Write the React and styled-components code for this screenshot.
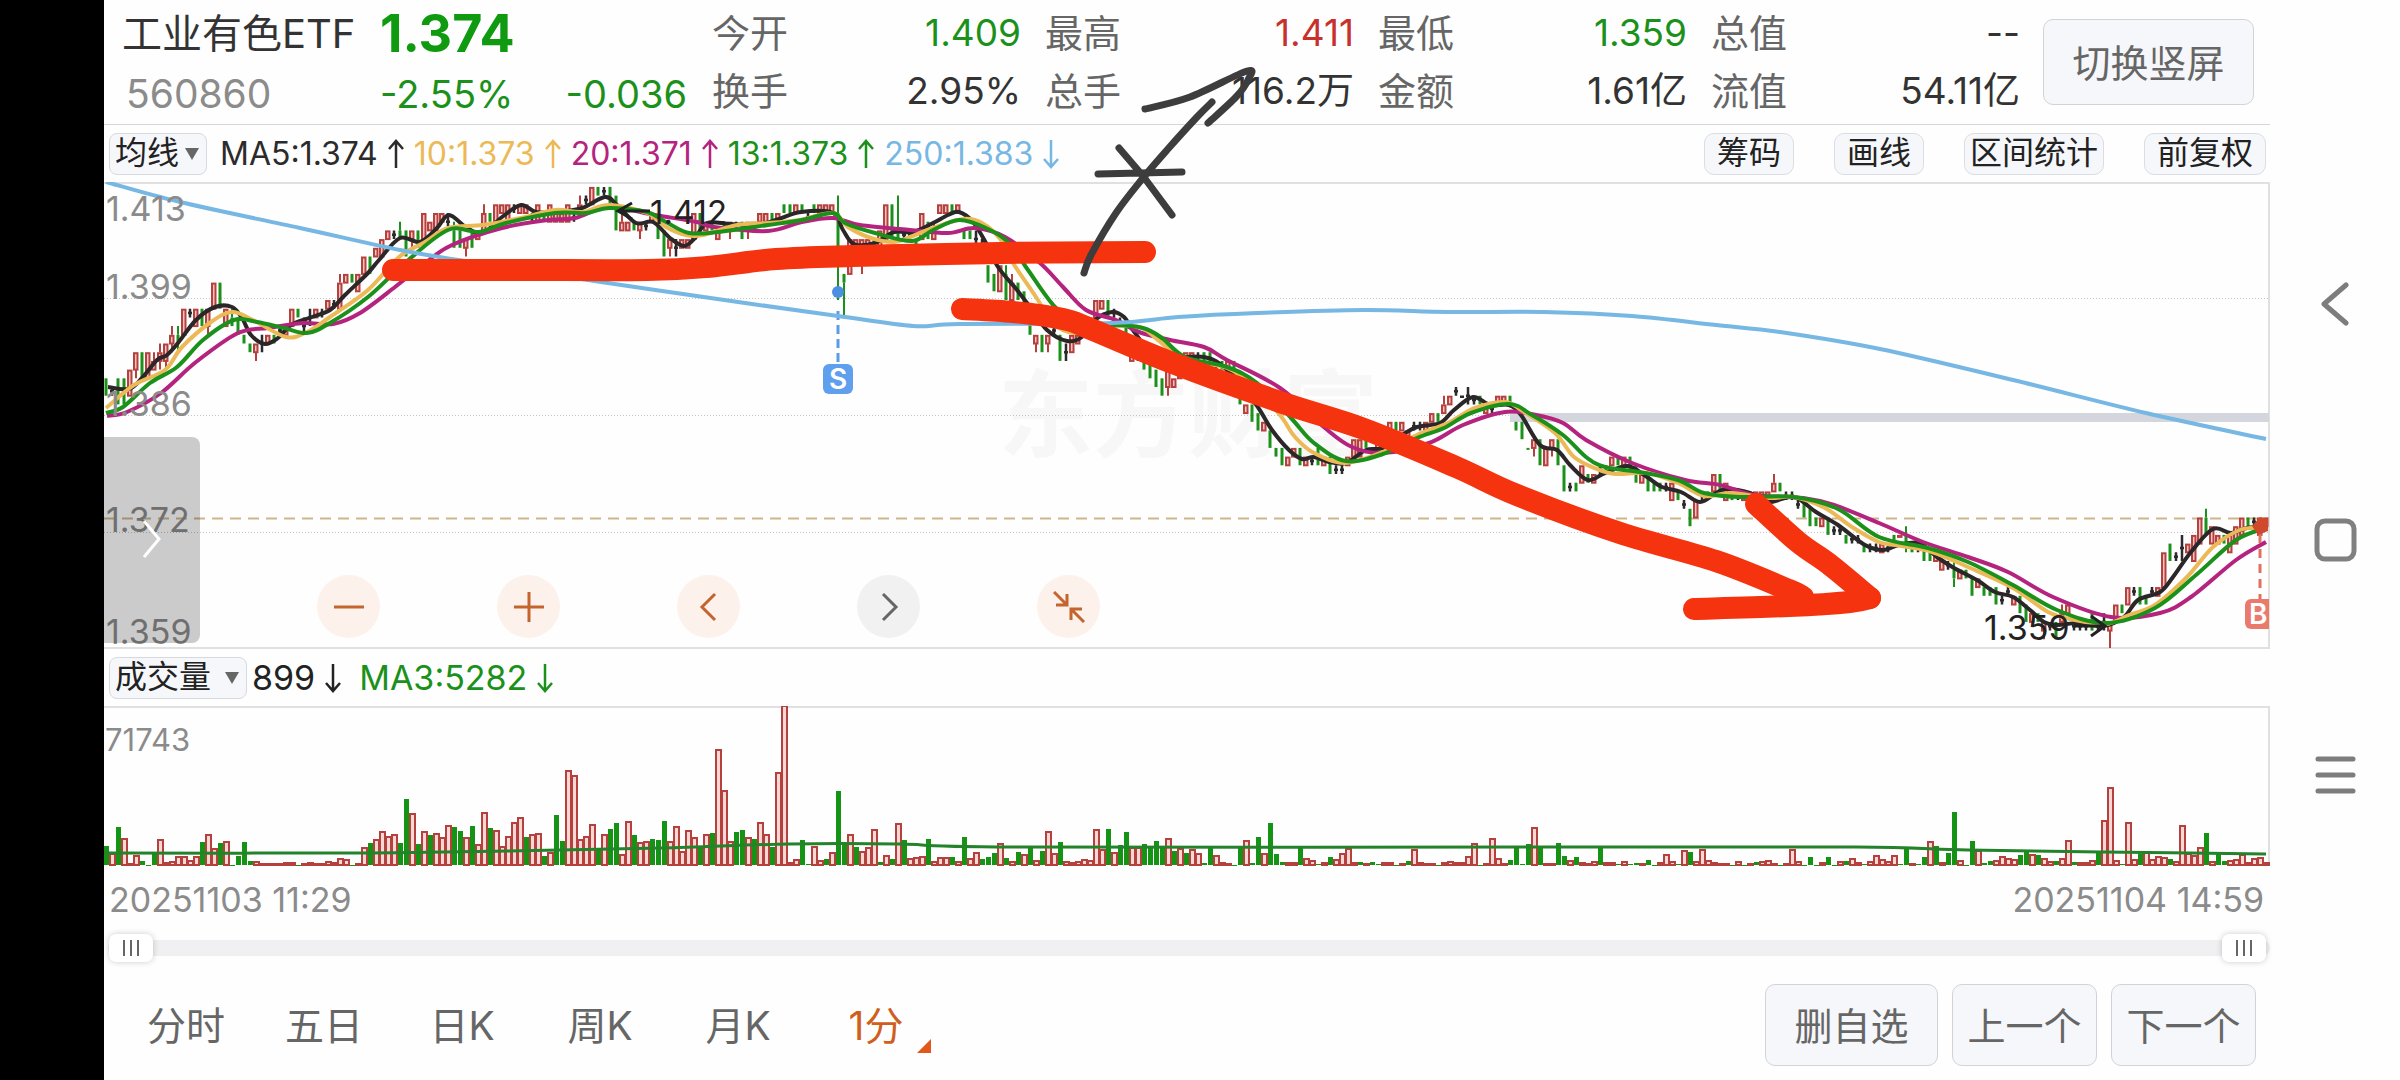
import React, { useState } from 'react'
import styled, { createGlobalStyle } from 'styled-components'

const GlobalStyle = createGlobalStyle`
  * {
    box-sizing: border-box;
  }
  body {
    margin: 0;
    background: #fefefe;
    font-family: Inter, "Noto Sans CJK SC", sans-serif;
    color: #333;
  }
  button, select {
    font-family: inherit;
  }
`

const UP = '#b5413e'
const DOWN = '#1b911b'
const FLAT = '#2b2b2b'

const Screen = styled.div`
  position: relative;
  display: flex;
  min-height: 100vh;
`

const Rail = styled.div`
  width: 104px;
  background: #000;
`

const Panel = styled.main`
  flex: 1;
  min-width: 0;
  display: flex;
  flex-direction: column;
`

const Header = styled.header`
  display: flex;
  padding: 4px 16px 0 18px;
  border-bottom: 1px solid #d6d6d6;
`

const NameBlock = styled.div`
  width: 258px;
`

const PriceBlock = styled.div`
  width: 307px;
`

const Name = styled.h1`
  margin: 0;
  font-size: 40px;
  font-weight: 400;
  line-height: 60px;
  white-space: nowrap;
`

const Code = styled.div`
  padding-left: 4px;
  font-size: 39px;
  line-height: 60px;
  color: #8b8b8b;
`

const Price = styled.div`
  font-size: 52px;
  font-weight: 700;
  line-height: 60px;
  color: #0f9a0f;
`

const Change = styled.div`
  display: flex;
  justify-content: space-between;
  font-size: 38px;
  line-height: 60px;
  color: ${DOWN};
`

const Stats = styled.dl`
  flex: 1;
  display: grid;
  grid-template-columns: repeat(4, 1fr);
  align-content: start;
  column-gap: 24px;
  margin: 0 23px 0 25px;
`

const Stat = styled.div`
  display: flex;
  justify-content: space-between;
  font-size: 38px;
  line-height: 58px;
  white-space: nowrap;

  dt {
    color: #666;
  }
  dd {
    margin: 0;
    color: ${(props) => props.$color || '#333'};
    font-size: 37px;
  }
`

const Button = styled.button`
  padding: 0 0 4px;
  border: 1px solid #d0d4d8;
  border-radius: 10px;
  background: #f6f7fa;
  color: #666;
  font-size: 38px;
  white-space: nowrap;
`

const SwitchButton = styled(Button)`
  width: 211px;
  height: 86px;
  margin-top: 15px;
`

const Bar = styled.div`
  display: flex;
  align-items: center;
  height: 57px;
  padding: 0 4px 0 5px;
`

const Picker = styled.label`
  position: relative;
  display: flex;
  width: ${(props) => props.$width};

  select {
    appearance: none;
    width: 100%;
    height: 42px;
    padding: 0 0 2px 5px;
    border: 1px solid #d6dadf;
    border-radius: 8px;
    background: #f6f7fa;
    color: #222;
    font-size: 32px;
    line-height: 38px;
  }
  svg {
    position: absolute;
    right: 8px;
    top: 15px;
    pointer-events: none;
  }
`

const Legend = styled.div`
  display: flex;
  flex: 1;
  gap: ${(props) => props.$gap};
  padding-left: ${(props) => props.$left};
`

const LegendItem = styled.span`
  display: flex;
  align-items: center;
  gap: 10px;
  color: ${(props) => props.$color};
  font-size: ${(props) => props.$size};
  line-height: 40px;
  white-space: nowrap;
`

const Tools = styled.div`
  display: flex;
  gap: 40px;
`

const ToolButton = styled(Button)`
  height: 42px;
  padding: 0 ${(props) => (props.$tight ? '5px' : '12px')} 2px;
  border-color: #dadee2;
  color: #222;
  font-size: 32px;
  line-height: 38px;
`

const ChartWrap = styled.section`
  position: relative;
`

const Chart = styled.svg`
  display: block;
  width: 100%;
  height: auto;
`

const Drawer = styled.button`
  position: absolute;
  left: 0;
  bottom: 6px;
  width: 96px;
  height: 206px;
  padding: 0;
  border: none;
  border-radius: 0 8px 8px 0;
  background: rgba(0, 0, 0, 0.2);
`

const Controls = styled.div`
  position: absolute;
  left: 213px;
  bottom: 11px;
  display: flex;
  gap: 117px;
`

const RoundButton = styled.button`
  display: flex;
  align-items: center;
  justify-content: center;
  width: 63px;
  height: 63px;
  padding: 0;
  border: none;
  border-radius: 50%;
  background: ${(props) => (props.$gray ? '#f1f1f2' : '#fdf1eb')};
  color: ${(props) => (props.$gray ? '#666' : '#c4652f')};
`

const Dates = styled.div`
  display: flex;
  justify-content: space-between;
  padding: 0 6px 0 5px;
  color: #8b8b8b;
  font-size: 34px;
  line-height: 65px;
`

const Range = styled.div`
  position: relative;
  display: flex;
  align-items: center;
  height: 32px;
  padding-left: 4px;

  &::before {
    content: '';
    flex: 1;
    height: 16px;
    border-radius: 8px;
    background: #f0f0f3;
  }
  input {
    position: absolute;
    left: 5px;
    right: 4px;
    width: calc(100% - 9px);
    height: 28px;
    margin: 0;
    appearance: none;
    background: none;
    pointer-events: none;
  }
  input::-webkit-slider-thumb {
    appearance: none;
    width: 44px;
    height: 28px;
    border: none;
    border-radius: 7px;
    background:
      linear-gradient(#666, #666) 14px 6px / 2px 16px no-repeat,
      linear-gradient(#666, #666) 21px 6px / 2px 16px no-repeat,
      linear-gradient(#666, #666) 28px 6px / 2px 16px no-repeat,
      #fff;
    box-shadow: 0 0 6px rgba(0, 0, 0, 0.2);
    pointer-events: auto;
  }
`

const Footer = styled.footer`
  display: flex;
  align-items: center;
  padding: 20px 14px 14px 13px;
`

const Tabs = styled.nav`
  flex: 1;
  display: flex;
`

const Tab = styled.button`
  position: relative;
  width: 138px;
  height: 60px;
  padding: 0 0 6px;
  border: none;
  background: none;
  color: ${(props) => (props.$active ? '#cf5f1d' : '#666')};
  font-size: 39px;

  svg {
    position: absolute;
    right: 14px;
    bottom: 2px;
  }
`

const Actions = styled.div`
  display: flex;
  gap: 14px;
`

const ActionButton = styled(Button)`
  width: ${(props) => props.$width};
  height: 82px;
`

const SystemNav = styled.nav`
  display: flex;
  flex-direction: column;
  align-items: center;
  justify-content: center;
  gap: 192px;
  width: 130px;

  button {
    display: flex;
    padding: 0;
    border: none;
    background: none;
  }
`

const Ink = styled.svg`
  position: absolute;
  left: 0;
  top: 0;
  width: 100%;
  height: auto;
  pointer-events: none;
`

const stats = [
  ['今开', '1.409', DOWN],
  ['最高', '1.411', '#c8302d'],
  ['最低', '1.359', DOWN],
  ['总值', '--'],
  ['换手', '2.95%'],
  ['总手', '116.2万'],
  ['金额', '1.61亿'],
  ['流值', '54.11亿'],
]

const averages = [
  ['MA5:1.374', '#2b2b2b', true],
  ['10:1.373', '#ecb957', true],
  ['20:1.371', '#b4237d', true],
  ['13:1.373', DOWN, true],
  ['250:1.383', '#76b7e3', false],
]

// one token per minute: colour, body high - body low, optional :wick high-wick low, in ticks above 1.359
const candles = `
g31-29 k30-29 g31-28 g31-28 r32-29 r34-32:34-31 g34-31 r34-31 r33-32:34-32 r34-33:35-32
r35-33:35-32 r36-35:37-34 g36-35:37-34 r39-36 k39-38 r39-37 g39-37 r39-37:39-36 r42-39 g42-39
r39-37 g38-37:39-37 g38-36 g36-35 g35-34 r35-34:35-33 k36-34 r36-35 g36-35 k37-36
r37-36 r39-37 g39-38 k38-36 k39-37 r39-38 k39-38 r40-39 k40-39 r42-39:43-39
r43-42 g43-42 r43-41 r45-43 g45-43 r46-45 r47-45 r48-47 k48-47 g48-47:49-47
g48-45 r48-47:48-46 g48-46 r50-47 r49-48 r50-48 r50-49 k50-48 g48-46:49-46 g48-46
r47-46:47-45 g48-46 r48-47 r50-48:51-48 g50-49 r51-49 r51-50 r51-49 k51-50 r51-50
r51-50 k50-49 r51-49 g50-49 r51-49 r50-49 r50-49 r51-49 k50-49 r51-50:52-50
k52-51 r53-51 g53-52 k53-52 g53-51 g52-48 r49-48:50-48 r49-48 g49-48 r49-48:49-47
k49-48 r50-49 g49-47 g48-45 r47-46:47-45 k47-45 r47-46 r47-46 r50-47 g50-48
r49-48 g49-48 r48-47 g49-48 r49-48:49-47 k49-48 g49-47 r49-48:49-47 r49-48 r50-49
r50-49 g50-49 r50-49 g51-50 g51-50 r51-50 g51-50 k50-49 g51-50 r51-50
r51-50 r51-50 g50-44:52-40 g43-42:43-38 r47-43 r47-45 r47-46:47-43 r47-46 g47-46 r48-46
r51-47 g51-47 g48-47:52-47 k48-47 k48-47 g47-46 r50-47 g49-47 r48-47:49-47 r51-50
r51-50 g51-50 r51-50 g48-47 g48-47 k48-46 k47-45 g44-42 g43-41 r44-41
g43-40:44-40 r42-40:43-40 g42-40 g41-39 g38-36 r36-35:36-34 g36-34 r36-35:36-34 k37-36 g36-33
k35-33 r36-34 r36-35 k37-36 r38-37 r40-38 r40-39 g40-38 k39-38 k38-37
g37-36 r34-33 k34-33 g33-32 g33-31 g32-30 g31-29 r32-30:32-29 r31-30 r32-31
r34-33 r34-33 k34-33 g34-33 g34-33 k33-32 g33-32 r33-32 g33-31 g29-28
r28-27 g28-26 g27-25 r26-25 g25-23 g23-22 g23-21 r22-21 r23-22 g23-21
r22-21 k22-21 g23-21 r22-21 g22-20 k21-20 k21-20 r22-21 r24-22 r24-22
g24-23 k23-22 r24-23 r25-24 r26-24 g26-25 r26-25 r25-24 k26-25 k26-25
r26-25 r27-26 g27-26 r28-27:29-27 r29-28 k30-29 k29-29 k30-28 k29-28 g29-28
r28-27 k28-27 r29-28 r29-28 g29-28 g26-25 g26-24 g23-23 r24-23:24-22 g24-21
r23-21 r24-23:24-22 g24-21 g21-18 k19-18 g19-18 r21-19 g20-19 r20-19 k21-20
g21-20 r22-21 g22-21 r22-21 g22-20 g21-19 r20-19 g20-18 g19-18 g19-18
k19-18 r19-17 g18-17 k17-16 g16-14 r17-15 k18-17 g18-17 r20-18 g20-18
r19-17 g18-17 k18-17 r18-17 g18-17 r18-17 r18-17 r18-17 r19-18:20-18 g19-18
k18-17 k18-17 k17-16 g17-15 g16-14 g15-14 r15-14 g15-13 k14-13 k14-13
g13-12 k13-12 k13-12 g12-11 k12-11 k12-11 r12-11 k12-11 g13-12 r13-13
g13-12:14-11 g12-11 k12-11 g12-10 g11-10 r11-10 r10-9 k10-9 g9-8:10-7 r9-8
g9-8 g8-6 r8-7 g7-6 g7-6 g7-5 k6-5 k7-6 r6-5 g6-4
g5-3 r4-3 g4-3 r3-2:3-1 k3-2 g3-1 r4-3:5-3 r5-4 k3-2 k3-2
k3-2 g4-2 k3-2 k4-2 r3-2:3-0 r5-3 g5-4 r7-5 k7-6 g7-5
g6-5 k7-6 r7-6 r11-7 g12-10 k11-10 k13-10 r12-11 r13-10 r15-12
g15-13:16-13 r14-12 r13-12 g13-12 r13-11 r14-12 r15-13 g15-14 k15-14 r15-13
r15-14
`.trim().split(/\s+/)

const volumes = `
g19 r11 g38 r26 r1 r9 g4 g0 g12 r25 r2 r3 r8 r8 r4 r8 g23 r30 r16 g22 r23 g0 g9 g23 g4 r3 r1 r1 r1 r1
r2 r2 g0 r1 r2 r1 r1 r3 r2 r6 r5 g0 r1 r17 g22 r25 r33 r28 r30 g22 g66 r51 g21 r33 g30 r31 r27 r39 g38 g34
r27 g39 r20 r52 g37 r34 r18 r28 r42 r47 g28 r30 r31 g9 r12 g50 g24 r94 r89 r25 r28 r40 g15 r30 g36 g42 r10 r43 g30 r22
r23 g26 g25 g44 r23 r38 r13 r34 r27 g17 r30 g32 r115 r74 r23 g33 g35 r27 g26 r42 r30 g18 r92 r159 r2 r5 g25 g1 r18 r4
g6 r12 g74 g21 r30 g18 r13 r17 r35 g3 r9 g6 r41 g25 r6 r7 r8 g26 r3 r7 r7 g8 r3 g28 r6 r12 g6 g8 g12 r21
g7 r3 g13 r10 g19 r4 g14 r33 r11 g23 r3 r2 r3 r5 r4 r35 r15 g36 r12 g20 g33 r17 r17 g21 g17 g24 g19 r26 g14 r16
g12 r15 r11 g2 g19 r9 r2 r1 g0 g19 r24 g2 g28 r11 g42 g11 g3 r2 r2 g17 r6 r4 g1 r2 g8 r5 r11 r16 r2 g3
r1 g3 g1 r2 r2 g0 r1 g4 r15 r2 r1 r1 g0 r2 r3 r2 r2 r8 r21 g0 r1 r26 r6 r1 g5 g18 g1 g21 r37 g17
r1 r1 g22 g9 r4 g8 r2 r1 r3 g19 r2 r2 g1 r3 g1 g2 r1 g5 g0 r2 r10 r3 g1 r14 g13 r3 r15 r4 r2 r1
r1 g0 r3 g0 r1 g3 r3 r4 r1 g0 r1 r15 r3 g0 g8 g0 r2 g8 g0 r3 g4 r6 r2 g1 r3 r9 r5 r3 r9 g1
g18 r1 g1 g8 r23 g19 r2 g12 g53 r4 g0 g24 r14 g2 g4 r4 r8 r6 r5 g10 g14 r10 g10 r6 r3 g4 r6 r24 g3 r2
r2 r4 g13 r44 r77 r4 g1 r42 r5 g11 r13 r5 r8 r7 g6 r3 r39 r11 r9 r17 g32 r3 g11 g4 r4 r5 r10 r2 r6 r7
r2
`.trim().split(/\s+/)

const ma5 = '108,387 129,389 142,378 157,360 167,355 178,343 196,320 215,307 232,307 242,318 251,335 265,344 278,338 291,325 312,317 330,310 345,295 368,273 379,260 400,238 420,242 437,228 449,215 467,228 483,233 502,217 521,205 536,212 559,212 582,208 605,197 617,205 636,223 653,222 670,238 684,246 695,238 707,223 730,224 757,225 776,220 801,212 833,213 843,230 854,244 875,243 894,232 913,232 933,223 948,215 959,212 973,222 986,243 998,267 1017,290 1030,307 1047,330 1067,341 1082,337 1095,320 1112,312 1124,317 1135,333 1158,357 1204,357 1227,370 1255,403 1272,430 1289,450 1302,459 1314,457 1329,462 1346,463 1366,450 1383,448 1402,435 1417,427 1440,423 1454,410 1473,397 1490,405 1509,405 1521,415 1540,445 1557,450 1570,465 1588,480 1605,473 1628,466 1647,477 1662,487 1681,492 1700,502 1716,493 1727,489 1750,493 1769,502 1794,497 1816,512 1838,525 1865,545 1883,550 1899,545 1919,543 1937,557 1954,568 1977,580 1995,592 2013,597 2030,610 2044,622 2057,625 2079,623 2104,626 2124,617 2138,600 2160,592 2173,577 2191,552 2213,529 2231,533 2247,528 2266,527'
const ma10 = '106,408 134,385 165,370 182,347 211,322 232,312 253,320 286,337 307,332 330,317 368,290 399,257 425,242 448,228 483,225 521,218 555,210 582,212 609,205 647,213 666,227 686,235 703,235 737,225 768,223 799,220 833,213 848,227 871,238 894,242 910,237 933,228 963,219 982,223 1001,240 1013,263 1036,297 1053,323 1074,333 1101,327 1139,327 1158,340 1185,360 1227,368 1254,387 1280,415 1295,437 1314,453 1345,463 1383,452 1417,435 1448,423 1475,408 1505,402 1524,412 1555,433 1574,457 1597,469 1616,474 1647,473 1678,483 1704,496 1731,493 1769,498 1794,497 1825,508 1852,527 1879,542 1901,546 1932,552 1968,567 2013,588 2048,612 2075,620 2106,624 2129,615 2155,605 2187,577 2213,547 2240,530 2266,527'
const ma13 = '106,413 123,407 150,383 177,367 203,340 234,320 257,322 284,328 307,333 330,323 368,297 406,262 448,230 479,232 506,223 555,213 586,213 609,208 647,212 666,222 689,233 718,232 768,225 802,220 833,213 845,223 875,233 912,241 933,230 959,220 986,228 1009,243 1028,270 1055,307 1082,327 1112,325 1143,328 1162,338 1185,357 1227,367 1257,383 1291,418 1314,443 1346,461 1383,454 1417,438 1444,428 1471,413 1509,404 1532,415 1563,435 1586,457 1605,467 1639,472 1678,480 1704,493 1739,497 1794,497 1838,509 1879,537 1928,548 1968,562 2013,585 2057,610 2106,623 2155,608 2196,575 2236,540 2266,528'
const ma20 = '107,416 127,412 161,393 196,362 238,333 268,328 303,323 333,324 360,313 395,287 425,263 452,245 502,228 548,220 575,218 609,207 655,215 697,222 714,227 768,231 802,222 833,218 860,225 910,230 948,233 975,228 1005,237 1040,263 1063,287 1086,310 1116,320 1139,332 1170,340 1204,347 1227,360 1280,388 1325,428 1352,447 1383,453 1429,443 1463,425 1505,412 1536,415 1563,423 1586,440 1632,463 1685,480 1720,485 1754,495 1803,498 1834,505 1879,523 1923,542 1968,557 2008,572 2053,597 2111,617 2160,613 2191,597 2236,560 2266,542'
const ma250 = '106,182 180,202 300,228 400,250 465,261 601,282 745,303 838,316 913,326 959,324 1112,323 1178,317 1257,313 1364,310 1448,312 1544,312 1632,316 1716,325 1780,332 1880,349 2013,380 2146,413 2266,439'
const volumeMa = '104,853 355,853 508,851 661,848 789,844 900,844 1015,847 1589,847 1856,847 1968,850 2102,852 2266,854'

const axis = [
  ['1.413', 221],
  ['1.399', 299],
  ['1.386', 416],
  ['1.372', 532],
  ['1.359', 644],
]

// Catmull-Rom through the points, as cubic beziers
const smooth = (points) => {
  const p = points.split(' ').map((s) => s.split(',').map(Number))
  let d = `M${p[0]}`
  for (let i = 0; i < p.length - 1; i++) {
    const a = p[i - 1] || p[i]
    const b = p[i]
    const c = p[i + 1]
    const e = p[i + 2] || c
    d += `C${b[0] + (c[0] - a[0]) / 6},${b[1] + (c[1] - a[1]) / 6} ${c[0] - (e[0] - b[0]) / 6},${c[1] - (e[1] - b[1]) / 6} ${c}`
  }
  return d
}

const barX = (i) => 106 + 6 * i
const tickY = (n) => 648 - 8.7 * n

const Candle = ({ token, i }) => {
  const [body, wick] = token.slice(1).split(':')
  const [hi, lo] = body.split('-').map(Number)
  const x = barX(i)
  const top = tickY(hi)
  const height = Math.max(tickY(lo) - top, 2)
  const [wHi, wLo] = wick ? wick.split('-').map(Number) : [hi, lo]
  if (token[0] === 'k') {
    return <path d={`M${x} ${top}v${height}M${x - 2} ${top + height / 2}h4`} stroke={FLAT} strokeWidth="2.5" />
  }
  const color = token[0] === 'r' ? UP : DOWN
  return (
    <g stroke={color} strokeWidth="2">
      {wHi > hi && <path d={`M${x} ${tickY(wHi)}V${top}`} />}
      {wLo < lo && <path d={`M${x} ${tickY(lo)}V${tickY(wLo)}`} />}
      {token[0] === 'r'
        ? <rect x={x - 2} y={top + 1} width="3.5" height={Math.max(height - 1, 1)} fill="#f3c4c1" strokeWidth="2" />
        : <path d={`M${x} ${top}v${height}`} strokeWidth="3" />}
    </g>
  )
}

const VolumeBar = ({ token, i }) => {
  const h = Number(token.slice(1))
  const x = barX(i)
  if (token[0] === 'g') {
    return <rect x={x - 2} y={865 - h} width="5" height={Math.max(h, 1)} fill="#149314" />
  }
  return <rect x={x - 2} y={865 - h} width="5" height={Math.max(h, 1)} fill="#f8d8d5" stroke={UP} strokeWidth="2" />
}

const Arrow = ({ up }) => (
  <svg width="16" height="30" viewBox="0 0 16 30" fill="none" stroke="currentColor" strokeWidth="2.5">
    {up ? <path d="M8 29V2M1 10L8 2l7 8" /> : <path d="M8 1v27M1 20l7 8 7-8" />}
  </svg>
)

const Caret = () => (
  <svg width="14" height="12" viewBox="0 0 14 12">
    <path d="M0 0h14L7 12z" fill="#666" />
  </svg>
)

const PriceChart = () => (
  <Chart viewBox="104 182 2166 467" fontFamily="Inter">
    <text x="998" y="450" fontFamily="Noto Sans CJK SC" fontWeight="700" fontSize="95" fill="#f7f7f7">东方财富</text>
    <path d="M104 298.500H2269M104 415.500H2269M104 532.500H2269" stroke="#c4c4c4" strokeDasharray="1 2" />
    <path d="M104 518.500H2269" stroke="#cdb58c" strokeWidth="2" strokeDasharray="11 7" />
    <path d="M104 183H2269V648H104" fill="none" stroke="#e0e0e0" strokeWidth="2" />
    <rect x="1510" y="413" width="759" height="9" fill="#d3d6dc" />
    <path d="M838 311V364" stroke="#5b9be8" strokeWidth="3" strokeDasharray="9 5" />
    {candles.map((token, i) => <Candle key={i} token={token} i={i} />)}
    <g fill="none" strokeWidth="4" strokeLinejoin="round">
      <path d={smooth(ma5)} stroke="#2b2627" />
      <path d={smooth(ma20)} stroke="#b4237d" />
      <path d={smooth(ma10)} stroke="#ecb957" />
      <path d={smooth(ma13)} stroke="#1b911b" />
      <path d={smooth(ma250)} stroke="#76b7e3" />
    </g>
    <g fontSize="34" fill="#8b8b8b">
      {axis.map(([label, y]) => <text key={label} x="106" y={y}>{label}</text>)}
    </g>
    <g fill="none" stroke="#222" strokeWidth="3">
      <path d="M650 211H618M632 203l-14 8 14 8" />
      <path d="M2074 626h30M2091 616l14 10-14 10" />
    </g>
    <text x="650" y="224" fontSize="33" fill="#222">1.412</text>
    <text x="1984" y="640" fontSize="34" fill="#222">1.359</text>
    <circle cx="838" cy="292" r="6" fill="#4a8fe0" />
    <rect x="823" y="364" width="30" height="30" rx="6" fill="#609eee" />
    <text x="838" y="389" fontSize="28" fontWeight="600" fill="#fff" textAnchor="middle">S</text>
    <path d="M2260 534V600" stroke="#e0705f" strokeWidth="3" strokeDasharray="9 6" />
    <path d="M2252 526l8-9 8 2v12l-10 4z" fill="#cf4a2c" />
    <path d="M2269 599h-18a6 6 0 0 0-6 6v18a6 6 0 0 0 6 6h18z" fill="#ea7a6b" />
    <text x="2249" y="624" fontSize="28" fontWeight="600" fill="#fff">B</text>
  </Chart>
)

const VolumeChart = () => (
  <Chart viewBox="104 706 2166 161" fontFamily="Inter">
    <path d="M104 707H2269V866" fill="none" stroke="#e0e0e0" strokeWidth="2" />
    <text x="105" y="751" fontSize="31" fill="#8b8b8b">71743</text>
    {volumes.map((token, i) => <VolumeBar key={i} token={token} i={i} />)}
    <path d={smooth(volumeMa)} fill="none" stroke="#23832a" strokeWidth="3" />
  </Chart>
)

const tabs = ['分时', '五日', '日K', '周K', '月K', '1分']

const App = () => {
  const [active, setActive] = useState('1分')
  const [from, setFrom] = useState(0)
  const [to, setTo] = useState(100)

  return (
    <Screen>
      <GlobalStyle />
      <Rail />
      <Panel>
        <Header>
          <NameBlock>
            <Name>工业有色ETF</Name>
            <Code>560860</Code>
          </NameBlock>
          <PriceBlock>
            <Price>1.374</Price>
            <Change>
              <span>-2.55%</span>
              <span>-0.036</span>
            </Change>
          </PriceBlock>
          <Stats>
            {stats.map(([label, value, color]) => (
              <Stat key={label} $color={color}>
                <dt>{label}</dt>
                <dd>{value}</dd>
              </Stat>
            ))}
          </Stats>
          <SwitchButton>切换竖屏</SwitchButton>
        </Header>

        <Bar>
          <Picker $width="98px">
            <select aria-label="主图指标">
              <option>均线</option>
            </select>
            <Caret />
          </Picker>
          <Legend $left="13px" $gap="10px">
            {averages.map(([text, color, up]) => (
              <LegendItem key={text} $color={color} $size="32px">
                {text}
                <Arrow up={up} />
              </LegendItem>
            ))}
          </Legend>
          <Tools>
            <ToolButton>筹码</ToolButton>
            <ToolButton>画线</ToolButton>
            <ToolButton $tight>区间统计</ToolButton>
            <ToolButton>前复权</ToolButton>
          </Tools>
        </Bar>

        <ChartWrap>
          <PriceChart />
          <Drawer aria-label="展开">
            <svg width="20" height="38" viewBox="0 0 20 38" fill="none" stroke="#fff" strokeWidth="3">
              <path d="M2 1l15 18L2 37" />
            </svg>
          </Drawer>
          <Controls>
            <RoundButton aria-label="缩小">
              <svg width="32" height="32" stroke="currentColor" strokeWidth="3"><path d="M1 16h30" /></svg>
            </RoundButton>
            <RoundButton aria-label="放大">
              <svg width="32" height="32" stroke="currentColor" strokeWidth="3"><path d="M1 16h30M16 1v30" /></svg>
            </RoundButton>
            <RoundButton aria-label="左移">
              <svg width="32" height="32" fill="none" stroke="currentColor" strokeWidth="3"><path d="M22 3L9 16l13 13" /></svg>
            </RoundButton>
            <RoundButton aria-label="右移" $gray>
              <svg width="32" height="32" fill="none" stroke="currentColor" strokeWidth="3"><path d="M10 3l13 13-13 13" /></svg>
            </RoundButton>
            <RoundButton aria-label="收起">
              <svg width="32" height="32" fill="none" stroke="currentColor" strokeWidth="3">
                <path d="M1 1l12 12M14 3v11H3M31 31L19 19M18 29V18h11" />
              </svg>
            </RoundButton>
          </Controls>
        </ChartWrap>

        <Bar>
          <Picker $width="138px">
            <select aria-label="副图指标">
              <option>成交量</option>
            </select>
            <Caret />
          </Picker>
          <Legend $left="5px" $gap="18px">
            <LegendItem $color="#222" $size="34px">
              899
              <Arrow />
            </LegendItem>
            <LegendItem $color={DOWN} $size="34px">
              MA3:5282
              <Arrow />
            </LegendItem>
          </Legend>
        </Bar>

        <VolumeChart />

        <Dates>
          <time>20251103 11:29</time>
          <time>20251104 14:59</time>
        </Dates>

        <Range>
          <input type="range" aria-label="开始" value={from} onChange={(e) => setFrom(e.target.value)} />
          <input type="range" aria-label="结束" value={to} onChange={(e) => setTo(e.target.value)} />
        </Range>

        <Footer>
          <Tabs>
            {tabs.map((tab) => (
              <Tab key={tab} $active={tab === active} onClick={() => setActive(tab)}>
                {tab}
                {tab === '1分' && (
                  <svg width="14" height="14"><path d="M14 0v14H0z" fill="#e0591a" /></svg>
                )}
              </Tab>
            ))}
          </Tabs>
          <Actions>
            <ActionButton $width="173px">删自选</ActionButton>
            <ActionButton $width="145px">上一个</ActionButton>
            <ActionButton $width="145px">下一个</ActionButton>
          </Actions>
        </Footer>
      </Panel>

      <SystemNav>
        <button aria-label="返回">
          <svg width="44" height="44" fill="none" stroke="#7d7d7d" strokeWidth="5" strokeLinecap="round" strokeLinejoin="round">
            <path d="M33 3L11 22l22 19" />
          </svg>
        </button>
        <button aria-label="主页">
          <svg width="44" height="44" fill="none" stroke="#808080" strokeWidth="5">
            <rect x="4" y="3" width="37" height="38" rx="8" />
          </svg>
        </button>
        <button aria-label="最近任务">
          <svg width="44" height="44" stroke="#7d7d7d" strokeWidth="5" strokeLinecap="round">
            <path d="M5 5h35M5 21h35M5 37h35" />
          </svg>
        </button>
      </SystemNav>

      <Ink viewBox="0 0 2400 1080" fill="none" strokeLinecap="round" strokeLinejoin="round">
        <g stroke="#f5330f" strokeWidth="22">
          <path d={smooth('393,270 520,270 647,270 707,267 776,259 852,256 1000,253 1145,252')} />
          <path d={smooth('962,309 1013,312 1063,319 1086,327 1170,362 1280,402 1364,429 1456,467 1517,495 1620,533 1716,561 1789,590 1803,597')} />
          <path d={smooth('1756,504 1798,542 1829,564 1870,598')} />
          <path d={smooth('1870,598 1850,602 1789,606 1694,609')} />
        </g>
        <g stroke="#3d3d3d" strokeWidth="7">
          <path d={smooth('1084,273 1091,255 1116,213 1143,178 1167,150 1197,117 1212,102')} />
          <path d={smooth('1145,109 1190,97 1247,71 1248,80 1236,97 1208,123')} />
          <path d="M1098 174L1182 172M1119 148L1143 176L1172 215" />
        </g>
      </Ink>
    </Screen>
  )
}

export default App
